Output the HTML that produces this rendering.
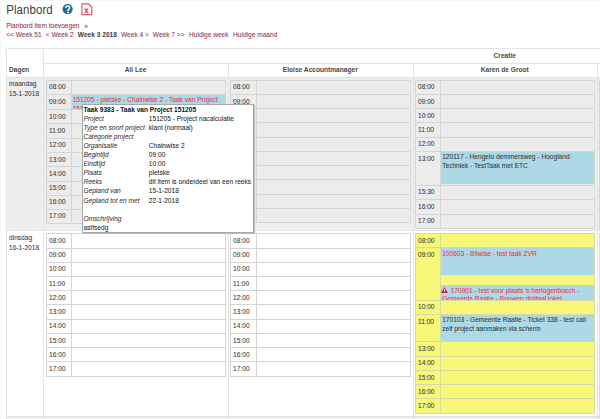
<!DOCTYPE html>
<html><head><meta charset="utf-8"><style>
html,body{margin:0;padding:0;background:#fff;width:600px;height:419px;overflow:hidden}
body{position:relative;font-family:"Liberation Sans",sans-serif}
.a{position:absolute}
.t{position:absolute;white-space:nowrap;-webkit-text-stroke:0.04px currentColor}
</style></head><body>
<div class="a" style="left:0.00px;top:0.00px;width:1px;height:419.00px;background:#f7f7f7"></div>
<div class="a" style="left:0.00px;top:0.00px;width:600.00px;height:1px;background:#f7f7f7"></div>
<div class="t" style="left:6.20px;top:1.72px;font-size:11.5px;line-height:16px;color:#3d3d3d;transform:scaleY(1.18);transform-origin:0 11.98px;-webkit-text-stroke:0;letter-spacing:0.07px">Planbord</div>
<svg class="a" style="left:62px;top:4px" width="12" height="12" viewBox="0 0 12 12"><circle cx="5.6" cy="5.1" r="5.1" fill="#1f6897"/><path d="M3.6 3.9 Q3.8 2.1 5.7 2.1 Q7.7 2.1 7.7 3.8 Q7.7 4.9 6.7 5.4 Q5.9 5.8 5.9 6.9 V7.4" fill="none" stroke="#fff" stroke-width="1.5"/><rect x="5.1" y="7.9" width="1.6" height="1.3" fill="#fff"/></svg>
<svg class="a" style="left:81px;top:3px" width="12" height="13" viewBox="0 0 12 13"><path d="M0.9 0.8 H7.6 L10.8 4.0 V11.7 H0.9 Z" fill="#fff" stroke="#e4566a" stroke-width="1.2" stroke-linejoin="round"/><path d="M7.8 1.2 Q8.6 3.2 10.8 3.6" fill="none" stroke="#e4566a" stroke-width="0.8"/><path d="M3.7 5.4 L7.1 10.2 M7.1 5.4 L3.7 10.2" stroke="#e0394f" stroke-width="1.1"/></svg>
<div class="t" style="left:6.20px;top:20.51px;font-size:6.6px;line-height:10px;color:#882c4a;transform:scaleY(1.1);transform-origin:0 7.29px;">Planbord item toevoegen</div>
<div class="t" style="left:84.20px;top:22.21px;font-size:6.6px;line-height:10px;color:#882c4a;transform:scaleY(1.1);transform-origin:0 7.29px;">&raquo;</div>
<div class="t" style="left:6.20px;top:29.51px;font-size:6.6px;line-height:10px;color:#882c4a;transform:scaleY(1.1);transform-origin:0 7.29px;">&lt;&lt; Week 51</div>
<div class="t" style="left:45.80px;top:29.51px;font-size:6.6px;line-height:10px;color:#882c4a;transform:scaleY(1.1);transform-origin:0 7.29px;">&lt; Week 2</div>
<div class="t" style="left:77.80px;top:29.51px;font-size:6.6px;line-height:10px;color:#3a3a3a;transform:scaleY(1.16);transform-origin:0 7.29px;font-weight:bold;-webkit-text-stroke:0">Week 3 2018</div>
<div class="t" style="left:121.00px;top:29.51px;font-size:6.6px;line-height:10px;color:#882c4a;transform:scaleY(1.1);transform-origin:0 7.29px;">Week 4 &gt;</div>
<div class="t" style="left:152.80px;top:29.51px;font-size:6.6px;line-height:10px;color:#882c4a;transform:scaleY(1.1);transform-origin:0 7.29px;">Week 7 &gt;&gt;</div>
<div class="t" style="left:189.00px;top:29.51px;font-size:6.6px;line-height:10px;color:#882c4a;transform:scaleY(1.1);transform-origin:0 7.29px;">Huidige week</div>
<div class="t" style="left:233.00px;top:29.51px;font-size:6.6px;line-height:10px;color:#882c4a;transform:scaleY(1.1);transform-origin:0 7.29px;">Huidige maand</div>
<div class="a" style="left:6.00px;top:78.00px;width:594.00px;height:151.80px;background:#eeeeee;"></div>
<div class="a" style="left:6.00px;top:417.20px;width:594.00px;height:1.80px;background:#eeeeee;"></div>
<div class="a" style="left:6.00px;top:48.00px;width:594.00px;height:1px;background:#e4e4e4"></div>
<div class="a" style="left:43.00px;top:63.00px;width:557.00px;height:1px;background:#e4e4e4"></div>
<div class="a" style="left:6.00px;top:77.00px;width:594.00px;height:1px;background:#e4e4e4"></div>
<div class="a" style="left:6.00px;top:229.80px;width:594.00px;height:1px;background:#e8e8e8"></div>
<div class="a" style="left:6.00px;top:416.20px;width:594.00px;height:1px;background:#e2e2e2"></div>
<div class="a" style="left:6.00px;top:48.00px;width:1px;height:371.00px;background:#e4e4e4"></div>
<div class="a" style="left:43.00px;top:48.00px;width:1px;height:371.00px;background:#e4e4e4"></div>
<div class="a" style="left:228.00px;top:63.00px;width:1px;height:356.00px;background:#e4e4e4"></div>
<div class="a" style="left:412.60px;top:63.00px;width:1px;height:356.00px;background:#e4e4e4"></div>
<div class="a" style="left:597.00px;top:63.00px;width:1px;height:356.00px;background:#e4e4e4"></div>
<div class="t" style="left:9.00px;top:65.11px;font-size:6.6px;line-height:10px;color:#474747;transform:scaleY(1.16);transform-origin:0 7.29px;font-weight:bold;-webkit-text-stroke:0">Dagen</div>
<div class="t" style="left:35.50px;width:200px;text-align:center;top:65.11px;font-size:6.6px;line-height:10px;color:#474747;transform:scaleY(1.16);transform-origin:0 7.29px;font-weight:bold;-webkit-text-stroke:0">Ali Lee</div>
<div class="t" style="left:220.30px;width:200px;text-align:center;top:65.11px;font-size:6.6px;line-height:10px;color:#474747;transform:scaleY(1.16);transform-origin:0 7.29px;font-weight:bold;-webkit-text-stroke:0">Eloise Accountmanager</div>
<div class="t" style="left:404.80px;width:200px;text-align:center;top:65.11px;font-size:6.6px;line-height:10px;color:#474747;transform:scaleY(1.16);transform-origin:0 7.29px;font-weight:bold;-webkit-text-stroke:0">Karen de Groot</div>
<div class="t" style="left:404.80px;width:200px;text-align:center;top:51.01px;font-size:6.6px;line-height:10px;color:#474747;transform:scaleY(1.16);transform-origin:0 7.29px;font-weight:bold;-webkit-text-stroke:0">Creatie</div>
<div class="t" style="left:9.00px;top:79.21px;font-size:6.6px;line-height:10px;color:#333;transform:scaleY(1.1);transform-origin:0 7.29px;">maandag</div>
<div class="t" style="left:9.00px;top:88.91px;font-size:6.6px;line-height:10px;color:#333;transform:scaleY(1.1);transform-origin:0 7.29px;">15-1-2018</div>
<div class="t" style="left:9.00px;top:233.31px;font-size:6.6px;line-height:10px;color:#333;transform:scaleY(1.1);transform-origin:0 7.29px;">dinsdag</div>
<div class="t" style="left:9.00px;top:242.91px;font-size:6.6px;line-height:10px;color:#333;transform:scaleY(1.1);transform-origin:0 7.29px;">16-1-2018</div>
<div class="a" style="left:46.30px;top:79.80px;width:179.70px;height:144.10px;background:#ececec;"></div>
<div class="a" style="left:46.30px;top:79.80px;width:179.70px;height:1px;background:#d5d5d5"></div>
<div class="a" style="left:46.30px;top:79.80px;width:1px;height:144.10px;background:#d5d5d5"></div>
<div class="a" style="left:225.00px;top:79.80px;width:1px;height:144.10px;background:#d5d5d5"></div>
<div class="a" style="left:71.20px;top:79.80px;width:1px;height:144.10px;background:#d5d5d5"></div>
<div class="a" style="left:46.30px;top:94.00px;width:179.70px;height:1px;background:#d5d5d5"></div>
<div class="a" style="left:46.30px;top:108.80px;width:179.70px;height:1px;background:#d5d5d5"></div>
<div class="a" style="left:46.30px;top:123.40px;width:179.70px;height:1px;background:#d5d5d5"></div>
<div class="a" style="left:46.30px;top:137.90px;width:179.70px;height:1px;background:#d5d5d5"></div>
<div class="a" style="left:46.30px;top:151.90px;width:179.70px;height:1px;background:#d5d5d5"></div>
<div class="a" style="left:46.30px;top:166.30px;width:179.70px;height:1px;background:#d5d5d5"></div>
<div class="a" style="left:46.30px;top:180.50px;width:179.70px;height:1px;background:#d5d5d5"></div>
<div class="a" style="left:46.30px;top:194.50px;width:179.70px;height:1px;background:#d5d5d5"></div>
<div class="a" style="left:46.30px;top:208.70px;width:179.70px;height:1px;background:#d5d5d5"></div>
<div class="a" style="left:46.30px;top:222.90px;width:179.70px;height:1px;background:#d5d5d5"></div>
<div class="a" style="left:230.30px;top:79.80px;width:180.30px;height:143.20px;background:#ececec;"></div>
<div class="a" style="left:230.30px;top:79.80px;width:180.30px;height:1px;background:#d5d5d5"></div>
<div class="a" style="left:230.30px;top:79.80px;width:1px;height:143.20px;background:#d5d5d5"></div>
<div class="a" style="left:409.60px;top:79.80px;width:1px;height:143.20px;background:#d5d5d5"></div>
<div class="a" style="left:255.50px;top:79.80px;width:1px;height:143.20px;background:#d5d5d5"></div>
<div class="a" style="left:230.30px;top:94.02px;width:180.30px;height:1px;background:#d5d5d5"></div>
<div class="a" style="left:230.30px;top:108.24px;width:180.30px;height:1px;background:#d5d5d5"></div>
<div class="a" style="left:230.30px;top:122.46px;width:180.30px;height:1px;background:#d5d5d5"></div>
<div class="a" style="left:230.30px;top:136.68px;width:180.30px;height:1px;background:#d5d5d5"></div>
<div class="a" style="left:230.30px;top:150.90px;width:180.30px;height:1px;background:#d5d5d5"></div>
<div class="a" style="left:230.30px;top:165.12px;width:180.30px;height:1px;background:#d5d5d5"></div>
<div class="a" style="left:230.30px;top:179.34px;width:180.30px;height:1px;background:#d5d5d5"></div>
<div class="a" style="left:230.30px;top:193.56px;width:180.30px;height:1px;background:#d5d5d5"></div>
<div class="a" style="left:230.30px;top:207.78px;width:180.30px;height:1px;background:#d5d5d5"></div>
<div class="a" style="left:230.30px;top:222.00px;width:180.30px;height:1px;background:#d5d5d5"></div>
<div class="a" style="left:415.20px;top:79.80px;width:179.60px;height:149.10px;background:#ececec;"></div>
<div class="a" style="left:415.20px;top:79.80px;width:179.60px;height:1px;background:#d5d5d5"></div>
<div class="a" style="left:415.20px;top:79.80px;width:1px;height:149.10px;background:#d5d5d5"></div>
<div class="a" style="left:593.80px;top:79.80px;width:1px;height:149.10px;background:#d5d5d5"></div>
<div class="a" style="left:440.40px;top:79.80px;width:1px;height:149.10px;background:#d5d5d5"></div>
<div class="a" style="left:415.20px;top:94.00px;width:179.60px;height:1px;background:#d5d5d5"></div>
<div class="a" style="left:415.20px;top:108.20px;width:179.60px;height:1px;background:#d5d5d5"></div>
<div class="a" style="left:415.20px;top:122.40px;width:179.60px;height:1px;background:#d5d5d5"></div>
<div class="a" style="left:415.20px;top:136.60px;width:179.60px;height:1px;background:#d5d5d5"></div>
<div class="a" style="left:415.20px;top:150.80px;width:179.60px;height:1px;background:#d5d5d5"></div>
<div class="a" style="left:415.20px;top:184.50px;width:179.60px;height:1px;background:#d5d5d5"></div>
<div class="a" style="left:415.20px;top:199.30px;width:179.60px;height:1px;background:#d5d5d5"></div>
<div class="a" style="left:415.20px;top:213.60px;width:179.60px;height:1px;background:#d5d5d5"></div>
<div class="a" style="left:415.20px;top:227.90px;width:179.60px;height:1px;background:#d5d5d5"></div>
<div class="a" style="left:46.30px;top:233.30px;width:179.70px;height:143.20px;background:#ffffff;"></div>
<div class="a" style="left:46.30px;top:233.30px;width:179.70px;height:1px;background:#d5d5d5"></div>
<div class="a" style="left:46.30px;top:233.30px;width:1px;height:143.20px;background:#d5d5d5"></div>
<div class="a" style="left:225.00px;top:233.30px;width:1px;height:143.20px;background:#d5d5d5"></div>
<div class="a" style="left:71.20px;top:233.30px;width:1px;height:143.20px;background:#d5d5d5"></div>
<div class="a" style="left:46.30px;top:247.52px;width:179.70px;height:1px;background:#d5d5d5"></div>
<div class="a" style="left:46.30px;top:261.74px;width:179.70px;height:1px;background:#d5d5d5"></div>
<div class="a" style="left:46.30px;top:275.96px;width:179.70px;height:1px;background:#d5d5d5"></div>
<div class="a" style="left:46.30px;top:290.18px;width:179.70px;height:1px;background:#d5d5d5"></div>
<div class="a" style="left:46.30px;top:304.40px;width:179.70px;height:1px;background:#d5d5d5"></div>
<div class="a" style="left:46.30px;top:318.62px;width:179.70px;height:1px;background:#d5d5d5"></div>
<div class="a" style="left:46.30px;top:332.84px;width:179.70px;height:1px;background:#d5d5d5"></div>
<div class="a" style="left:46.30px;top:347.06px;width:179.70px;height:1px;background:#d5d5d5"></div>
<div class="a" style="left:46.30px;top:361.28px;width:179.70px;height:1px;background:#d5d5d5"></div>
<div class="a" style="left:46.30px;top:375.50px;width:179.70px;height:1px;background:#d5d5d5"></div>
<div class="a" style="left:230.30px;top:233.30px;width:180.30px;height:143.20px;background:#ffffff;"></div>
<div class="a" style="left:230.30px;top:233.30px;width:180.30px;height:1px;background:#d5d5d5"></div>
<div class="a" style="left:230.30px;top:233.30px;width:1px;height:143.20px;background:#d5d5d5"></div>
<div class="a" style="left:409.60px;top:233.30px;width:1px;height:143.20px;background:#d5d5d5"></div>
<div class="a" style="left:255.50px;top:233.30px;width:1px;height:143.20px;background:#d5d5d5"></div>
<div class="a" style="left:230.30px;top:247.52px;width:180.30px;height:1px;background:#d5d5d5"></div>
<div class="a" style="left:230.30px;top:261.74px;width:180.30px;height:1px;background:#d5d5d5"></div>
<div class="a" style="left:230.30px;top:275.96px;width:180.30px;height:1px;background:#d5d5d5"></div>
<div class="a" style="left:230.30px;top:290.18px;width:180.30px;height:1px;background:#d5d5d5"></div>
<div class="a" style="left:230.30px;top:304.40px;width:180.30px;height:1px;background:#d5d5d5"></div>
<div class="a" style="left:230.30px;top:318.62px;width:180.30px;height:1px;background:#d5d5d5"></div>
<div class="a" style="left:230.30px;top:332.84px;width:180.30px;height:1px;background:#d5d5d5"></div>
<div class="a" style="left:230.30px;top:347.06px;width:180.30px;height:1px;background:#d5d5d5"></div>
<div class="a" style="left:230.30px;top:361.28px;width:180.30px;height:1px;background:#d5d5d5"></div>
<div class="a" style="left:230.30px;top:375.50px;width:180.30px;height:1px;background:#d5d5d5"></div>
<div class="a" style="left:415.20px;top:233.30px;width:179.60px;height:180.40px;background:#f8f878;"></div>
<div class="a" style="left:415.20px;top:233.30px;width:179.60px;height:1px;background:#d9d8a8"></div>
<div class="a" style="left:415.20px;top:233.30px;width:1px;height:180.40px;background:#d9d8a8"></div>
<div class="a" style="left:593.80px;top:233.30px;width:1px;height:180.40px;background:#d9d8a8"></div>
<div class="a" style="left:440.40px;top:233.30px;width:1px;height:180.40px;background:#d9d8a8"></div>
<div class="a" style="left:415.20px;top:247.40px;width:179.60px;height:1px;background:#d9d8a8"></div>
<div class="a" style="left:415.20px;top:299.70px;width:179.60px;height:1px;background:#d9d8a8"></div>
<div class="a" style="left:415.20px;top:313.80px;width:179.60px;height:1px;background:#d9d8a8"></div>
<div class="a" style="left:415.20px;top:341.30px;width:179.60px;height:1px;background:#d9d8a8"></div>
<div class="a" style="left:415.20px;top:355.58px;width:179.60px;height:1px;background:#d9d8a8"></div>
<div class="a" style="left:415.20px;top:369.86px;width:179.60px;height:1px;background:#d9d8a8"></div>
<div class="a" style="left:415.20px;top:384.14px;width:179.60px;height:1px;background:#d9d8a8"></div>
<div class="a" style="left:415.20px;top:398.42px;width:179.60px;height:1px;background:#d9d8a8"></div>
<div class="a" style="left:415.20px;top:412.70px;width:179.60px;height:1px;background:#d9d8a8"></div>
<div class="a" style="left:599.00px;top:79.80px;width:1px;height:150.20px;background:#d5d5d5"></div>
<div class="a" style="left:599.00px;top:233.30px;width:1px;height:185.70px;background:#dcdcdc"></div>
<div class="a" style="left:72.20px;top:95.00px;width:152.80px;height:13.80px;background:#add8e6;"></div>
<div class="a" style="left:72.2px;top:95.00px;width:152.8px;height:13.80px;overflow:hidden"><div class="t" style="left:0.5px;top:0.81px;width:150px;font-size:6.6px;line-height:8.2px;color:#ec3042;white-space:normal;transform:scaleY(1.1);transform-origin:0 6.39px">151205 - pletske - Chainwise 2 - Taak van Project 151205</div></div>
<div class="a" style="left:441.20px;top:151.80px;width:152.80px;height:32.70px;background:#add8e6;"></div>
<div class="t" style="left:442.20px;top:151.91px;font-size:6.6px;line-height:10px;color:#333;transform:scaleY(1.1);transform-origin:0 7.29px;">120117 - Hengelo demmersweg - Hoogland</div>
<div class="t" style="left:442.20px;top:161.31px;font-size:6.6px;line-height:10px;color:#333;transform:scaleY(1.1);transform-origin:0 7.29px;">Techniek - TestTaak met ETC</div>
<div class="t" style="left:49.10px;top:82.46px;font-size:6.6px;line-height:10px;color:#333;transform:scaleY(1.1);transform-origin:0 7.29px;">08:00</div>
<div class="t" style="left:49.10px;top:96.96px;font-size:6.6px;line-height:10px;color:#333;transform:scaleY(1.1);transform-origin:0 7.29px;">09:00</div>
<div class="t" style="left:49.10px;top:111.66px;font-size:6.6px;line-height:10px;color:#333;transform:scaleY(1.1);transform-origin:0 7.29px;">10:00</div>
<div class="t" style="left:49.10px;top:126.21px;font-size:6.6px;line-height:10px;color:#333;transform:scaleY(1.1);transform-origin:0 7.29px;">11:00</div>
<div class="t" style="left:49.10px;top:140.46px;font-size:6.6px;line-height:10px;color:#333;transform:scaleY(1.1);transform-origin:0 7.29px;">12:00</div>
<div class="t" style="left:49.10px;top:154.66px;font-size:6.6px;line-height:10px;color:#333;transform:scaleY(1.1);transform-origin:0 7.29px;">13:00</div>
<div class="t" style="left:49.10px;top:168.96px;font-size:6.6px;line-height:10px;color:#333;transform:scaleY(1.1);transform-origin:0 7.29px;">14:00</div>
<div class="t" style="left:49.10px;top:183.06px;font-size:6.6px;line-height:10px;color:#333;transform:scaleY(1.1);transform-origin:0 7.29px;">15:00</div>
<div class="t" style="left:49.10px;top:197.16px;font-size:6.6px;line-height:10px;color:#333;transform:scaleY(1.1);transform-origin:0 7.29px;">16:00</div>
<div class="t" style="left:49.10px;top:211.36px;font-size:6.6px;line-height:10px;color:#333;transform:scaleY(1.1);transform-origin:0 7.29px;">17:00</div>
<div class="t" style="left:233.10px;top:82.47px;font-size:6.6px;line-height:10px;color:#333;transform:scaleY(1.1);transform-origin:0 7.29px;">08:00</div>
<div class="t" style="left:233.10px;top:96.69px;font-size:6.6px;line-height:10px;color:#333;transform:scaleY(1.1);transform-origin:0 7.29px;">09:00</div>
<div class="t" style="left:233.10px;top:110.91px;font-size:6.6px;line-height:10px;color:#333;transform:scaleY(1.1);transform-origin:0 7.29px;">10:00</div>
<div class="t" style="left:233.10px;top:125.13px;font-size:6.6px;line-height:10px;color:#333;transform:scaleY(1.1);transform-origin:0 7.29px;">11:00</div>
<div class="t" style="left:233.10px;top:139.35px;font-size:6.6px;line-height:10px;color:#333;transform:scaleY(1.1);transform-origin:0 7.29px;">12:00</div>
<div class="t" style="left:233.10px;top:153.57px;font-size:6.6px;line-height:10px;color:#333;transform:scaleY(1.1);transform-origin:0 7.29px;">13:00</div>
<div class="t" style="left:233.10px;top:167.79px;font-size:6.6px;line-height:10px;color:#333;transform:scaleY(1.1);transform-origin:0 7.29px;">14:00</div>
<div class="t" style="left:233.10px;top:182.01px;font-size:6.6px;line-height:10px;color:#333;transform:scaleY(1.1);transform-origin:0 7.29px;">15:00</div>
<div class="t" style="left:233.10px;top:196.23px;font-size:6.6px;line-height:10px;color:#333;transform:scaleY(1.1);transform-origin:0 7.29px;">16:00</div>
<div class="t" style="left:233.10px;top:210.45px;font-size:6.6px;line-height:10px;color:#333;transform:scaleY(1.1);transform-origin:0 7.29px;">17:00</div>
<div class="t" style="left:418.00px;top:82.46px;font-size:6.6px;line-height:10px;color:#333;transform:scaleY(1.1);transform-origin:0 7.29px;">08:00</div>
<div class="t" style="left:418.00px;top:96.66px;font-size:6.6px;line-height:10px;color:#333;transform:scaleY(1.1);transform-origin:0 7.29px;">09:00</div>
<div class="t" style="left:418.00px;top:110.86px;font-size:6.6px;line-height:10px;color:#333;transform:scaleY(1.1);transform-origin:0 7.29px;">10:00</div>
<div class="t" style="left:418.00px;top:125.06px;font-size:6.6px;line-height:10px;color:#333;transform:scaleY(1.1);transform-origin:0 7.29px;">11:00</div>
<div class="t" style="left:418.00px;top:139.26px;font-size:6.6px;line-height:10px;color:#333;transform:scaleY(1.1);transform-origin:0 7.29px;">12:00</div>
<div class="t" style="left:418.00px;top:153.71px;font-size:6.6px;line-height:10px;color:#333;transform:scaleY(1.1);transform-origin:0 7.29px;">13:00</div>
<div class="t" style="left:418.00px;top:187.46px;font-size:6.6px;line-height:10px;color:#333;transform:scaleY(1.1);transform-origin:0 7.29px;">15:30</div>
<div class="t" style="left:418.00px;top:202.01px;font-size:6.6px;line-height:10px;color:#333;transform:scaleY(1.1);transform-origin:0 7.29px;">16:00</div>
<div class="t" style="left:418.00px;top:216.31px;font-size:6.6px;line-height:10px;color:#333;transform:scaleY(1.1);transform-origin:0 7.29px;">17:00</div>
<div class="t" style="left:49.10px;top:235.97px;font-size:6.6px;line-height:10px;color:#333;transform:scaleY(1.1);transform-origin:0 7.29px;">08:00</div>
<div class="t" style="left:49.10px;top:250.19px;font-size:6.6px;line-height:10px;color:#333;transform:scaleY(1.1);transform-origin:0 7.29px;">09:00</div>
<div class="t" style="left:49.10px;top:264.41px;font-size:6.6px;line-height:10px;color:#333;transform:scaleY(1.1);transform-origin:0 7.29px;">10:00</div>
<div class="t" style="left:49.10px;top:278.63px;font-size:6.6px;line-height:10px;color:#333;transform:scaleY(1.1);transform-origin:0 7.29px;">11:00</div>
<div class="t" style="left:49.10px;top:292.85px;font-size:6.6px;line-height:10px;color:#333;transform:scaleY(1.1);transform-origin:0 7.29px;">12:00</div>
<div class="t" style="left:49.10px;top:307.07px;font-size:6.6px;line-height:10px;color:#333;transform:scaleY(1.1);transform-origin:0 7.29px;">13:00</div>
<div class="t" style="left:49.10px;top:321.29px;font-size:6.6px;line-height:10px;color:#333;transform:scaleY(1.1);transform-origin:0 7.29px;">14:00</div>
<div class="t" style="left:49.10px;top:335.51px;font-size:6.6px;line-height:10px;color:#333;transform:scaleY(1.1);transform-origin:0 7.29px;">15:00</div>
<div class="t" style="left:49.10px;top:349.73px;font-size:6.6px;line-height:10px;color:#333;transform:scaleY(1.1);transform-origin:0 7.29px;">16:00</div>
<div class="t" style="left:49.10px;top:363.95px;font-size:6.6px;line-height:10px;color:#333;transform:scaleY(1.1);transform-origin:0 7.29px;">17:00</div>
<div class="t" style="left:233.10px;top:235.97px;font-size:6.6px;line-height:10px;color:#333;transform:scaleY(1.1);transform-origin:0 7.29px;">08:00</div>
<div class="t" style="left:233.10px;top:250.19px;font-size:6.6px;line-height:10px;color:#333;transform:scaleY(1.1);transform-origin:0 7.29px;">09:00</div>
<div class="t" style="left:233.10px;top:264.41px;font-size:6.6px;line-height:10px;color:#333;transform:scaleY(1.1);transform-origin:0 7.29px;">10:00</div>
<div class="t" style="left:233.10px;top:278.63px;font-size:6.6px;line-height:10px;color:#333;transform:scaleY(1.1);transform-origin:0 7.29px;">11:00</div>
<div class="t" style="left:233.10px;top:292.85px;font-size:6.6px;line-height:10px;color:#333;transform:scaleY(1.1);transform-origin:0 7.29px;">12:00</div>
<div class="t" style="left:233.10px;top:307.07px;font-size:6.6px;line-height:10px;color:#333;transform:scaleY(1.1);transform-origin:0 7.29px;">13:00</div>
<div class="t" style="left:233.10px;top:321.29px;font-size:6.6px;line-height:10px;color:#333;transform:scaleY(1.1);transform-origin:0 7.29px;">14:00</div>
<div class="t" style="left:233.10px;top:335.51px;font-size:6.6px;line-height:10px;color:#333;transform:scaleY(1.1);transform-origin:0 7.29px;">15:00</div>
<div class="t" style="left:233.10px;top:349.73px;font-size:6.6px;line-height:10px;color:#333;transform:scaleY(1.1);transform-origin:0 7.29px;">16:00</div>
<div class="t" style="left:233.10px;top:363.95px;font-size:6.6px;line-height:10px;color:#333;transform:scaleY(1.1);transform-origin:0 7.29px;">17:00</div>
<div class="t" style="left:418.00px;top:235.91px;font-size:6.6px;line-height:10px;color:#333;transform:scaleY(1.1);transform-origin:0 7.29px;">08:00</div>
<div class="t" style="left:418.00px;top:250.31px;font-size:6.6px;line-height:10px;color:#333;transform:scaleY(1.1);transform-origin:0 7.29px;">09:00</div>
<div class="t" style="left:418.00px;top:302.31px;font-size:6.6px;line-height:10px;color:#333;transform:scaleY(1.1);transform-origin:0 7.29px;">10:00</div>
<div class="t" style="left:418.00px;top:316.71px;font-size:6.6px;line-height:10px;color:#333;transform:scaleY(1.1);transform-origin:0 7.29px;">11:00</div>
<div class="t" style="left:418.00px;top:344.00px;font-size:6.6px;line-height:10px;color:#333;transform:scaleY(1.1);transform-origin:0 7.29px;">13:00</div>
<div class="t" style="left:418.00px;top:358.28px;font-size:6.6px;line-height:10px;color:#333;transform:scaleY(1.1);transform-origin:0 7.29px;">14:00</div>
<div class="t" style="left:418.00px;top:372.56px;font-size:6.6px;line-height:10px;color:#333;transform:scaleY(1.1);transform-origin:0 7.29px;">15:00</div>
<div class="t" style="left:418.00px;top:386.84px;font-size:6.6px;line-height:10px;color:#333;transform:scaleY(1.1);transform-origin:0 7.29px;">16:00</div>
<div class="t" style="left:418.00px;top:401.12px;font-size:6.6px;line-height:10px;color:#333;transform:scaleY(1.1);transform-origin:0 7.29px;">17:00</div>
<div class="a" style="left:441.20px;top:248.40px;width:152.80px;height:26.40px;background:#add8e6;"></div>
<div class="t" style="left:442.20px;top:248.51px;font-size:6.6px;line-height:10px;color:#ec3042;transform:scaleY(1.1);transform-origin:0 7.29px;">100603 - Bitwise - test taak ZVR</div>
<div class="a" style="left:441.20px;top:284.50px;width:152.80px;height:15.20px;background:#add8e6;"></div>
<div class="a" style="left:441.2px;top:284.5px;width:152.8px;height:15.20px;overflow:hidden"><svg class="a" style="left:0.3px;top:2.3px" width="7" height="6" viewBox="0 0 7 6"><path d="M3.4 0 L6.8 6 H0 Z" fill="#d41c2c"/><path d="M3.4 1.9 V4" stroke="#fff" stroke-width="0.9"/><rect x="2.95" y="4.4" width="0.9" height="0.8" fill="#fff"/></svg><div class="t" style="left:9.5px;top:1.31px;font-size:6.6px;line-height:10px;color:#ec3042;transform:scaleY(1.1);transform-origin:0 7.29px">170901 - test voor plaats 's hertogenbosch -</div><div class="t" style="left:1px;top:9.81px;font-size:6.6px;line-height:10px;color:#ec3042;transform:scaleY(1.1);transform-origin:0 7.29px">Gemeente Raalte - Bouwen digitaal loket</div></div>
<div class="a" style="left:441.20px;top:314.80px;width:152.80px;height:26.50px;background:#add8e6;"></div>
<div class="t" style="left:442.20px;top:315.31px;font-size:6.6px;line-height:10px;color:#333;transform:scaleY(1.1);transform-origin:0 7.29px;">170103 - Gemeente Raalte - Ticket 338 - test call</div>
<div class="t" style="left:442.20px;top:324.31px;font-size:6.6px;line-height:10px;color:#333;transform:scaleY(1.1);transform-origin:0 7.29px;">zelf project aanmaken via scherm</div>
<div class="a" style="left:82.0px;top:104.2px;width:169.80px;height:126.40px;background:#fff;border:1px solid #a8a8a8;box-shadow:0.6px 0.6px 0.6px #bbb"></div>
<div class="t" style="left:83.40px;top:104.51px;font-size:6.6px;line-height:10px;color:#111;transform:scaleY(1.16);transform-origin:0 7.29px;font-weight:bold;-webkit-text-stroke:0">Taak 9383 - Taak van Project 151205</div>
<div class="t" style="left:83.40px;top:113.91px;font-size:6.6px;line-height:10px;color:#333;transform:scaleY(1.1);transform-origin:0 7.29px;font-style:italic">Project</div>
<div class="t" style="left:148.80px;top:113.91px;font-size:6.6px;line-height:10px;color:#222;transform:scaleY(1.1);transform-origin:0 7.29px;">151205 - Project nacalculatie</div>
<div class="t" style="left:83.40px;top:122.98px;font-size:6.6px;line-height:10px;color:#333;transform:scaleY(1.1);transform-origin:0 7.29px;font-style:italic">Type en soort project</div>
<div class="t" style="left:148.80px;top:122.98px;font-size:6.6px;line-height:10px;color:#222;transform:scaleY(1.1);transform-origin:0 7.29px;">klant (normaal)</div>
<div class="t" style="left:83.40px;top:132.05px;font-size:6.6px;line-height:10px;color:#333;transform:scaleY(1.1);transform-origin:0 7.29px;font-style:italic">Categorie project</div>
<div class="t" style="left:83.40px;top:141.12px;font-size:6.6px;line-height:10px;color:#333;transform:scaleY(1.1);transform-origin:0 7.29px;font-style:italic">Organisatie</div>
<div class="t" style="left:148.80px;top:141.12px;font-size:6.6px;line-height:10px;color:#222;transform:scaleY(1.1);transform-origin:0 7.29px;">Chainwise 2</div>
<div class="t" style="left:83.40px;top:150.19px;font-size:6.6px;line-height:10px;color:#333;transform:scaleY(1.1);transform-origin:0 7.29px;font-style:italic">Begintijd</div>
<div class="t" style="left:148.80px;top:150.19px;font-size:6.6px;line-height:10px;color:#222;transform:scaleY(1.1);transform-origin:0 7.29px;">09:00</div>
<div class="t" style="left:83.40px;top:159.26px;font-size:6.6px;line-height:10px;color:#333;transform:scaleY(1.1);transform-origin:0 7.29px;font-style:italic">Eindtijd</div>
<div class="t" style="left:148.80px;top:159.26px;font-size:6.6px;line-height:10px;color:#222;transform:scaleY(1.1);transform-origin:0 7.29px;">10:00</div>
<div class="t" style="left:83.40px;top:168.33px;font-size:6.6px;line-height:10px;color:#333;transform:scaleY(1.1);transform-origin:0 7.29px;font-style:italic">Plaats</div>
<div class="t" style="left:148.80px;top:168.33px;font-size:6.6px;line-height:10px;color:#222;transform:scaleY(1.1);transform-origin:0 7.29px;">pletske</div>
<div class="t" style="left:83.40px;top:177.40px;font-size:6.6px;line-height:10px;color:#333;transform:scaleY(1.1);transform-origin:0 7.29px;font-style:italic">Reeks</div>
<div class="t" style="left:148.80px;top:177.40px;font-size:6.6px;line-height:10px;color:#222;transform:scaleY(1.1);transform-origin:0 7.29px;">dit item is onderdeel van een reeks</div>
<div class="t" style="left:83.40px;top:186.47px;font-size:6.6px;line-height:10px;color:#333;transform:scaleY(1.1);transform-origin:0 7.29px;font-style:italic">Gepland van</div>
<div class="t" style="left:148.80px;top:186.47px;font-size:6.6px;line-height:10px;color:#222;transform:scaleY(1.1);transform-origin:0 7.29px;">15-1-2018</div>
<div class="t" style="left:83.40px;top:195.54px;font-size:6.6px;line-height:10px;color:#333;transform:scaleY(1.1);transform-origin:0 7.29px;font-style:italic">Gepland tot en met</div>
<div class="t" style="left:148.80px;top:195.54px;font-size:6.6px;line-height:10px;color:#222;transform:scaleY(1.1);transform-origin:0 7.29px;">22-1-2018</div>
<div class="t" style="left:83.40px;top:213.68px;font-size:6.6px;line-height:10px;color:#333;transform:scaleY(1.1);transform-origin:0 7.29px;font-style:italic">Omschrijving</div>
<div class="t" style="left:83.40px;top:222.75px;font-size:6.6px;line-height:10px;color:#222;transform:scaleY(1.1);transform-origin:0 7.29px;">astfsedg</div>
</body></html>
